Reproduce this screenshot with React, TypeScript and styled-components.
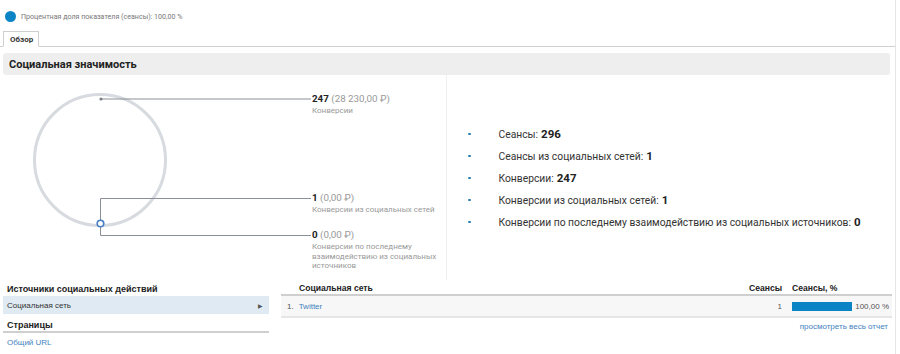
import React from "react";
import styled, { createGlobalStyle } from "styled-components";

const Global = createGlobalStyle`
  html, body { margin: 0; padding: 0; background: #fff; }
  body { font-family: Roboto, "Noto Sans", Arial, sans-serif; color: #333; }
  * { box-sizing: border-box; }
`;

const Page = styled.div`
  width: 896px;
  height: 354px;
  border-right: 1px solid #e6e6e6;
  overflow: hidden;
`;

const Legend = styled.div`
  height: 32px;
  display: flex;
  align-items: center;
  padding-left: 5px;
  gap: 5px;
  font-size: 7.1px;
  color: #777;
`;

const Dot = styled.span`
  width: 11px;
  height: 11px;
  border-radius: 50%;
  background: #0b84c6;
`;

const TabBar = styled.div`
  height: 15px;
  padding-left: 3px;
  border-bottom: 1px solid #cfcfcf;
  display: flex;
  align-items: flex-end;
`;

const Tab = styled.div`
  height: 16px;
  margin-bottom: -1px;
  padding: 0 5px 0 6px;
  border: 1px solid #cfcfcf;
  border-bottom-color: #fff;
  background: #fff;
  font-size: 8px;
  font-weight: 700;
  color: #333;
  display: flex;
  align-items: center;
`;

const SectionHeader = styled.div`
  margin: 6px 0 0 3px;
  width: 887px;
  height: 22px;
  border-radius: 3px;
  background: #eeeeee;
  display: flex;
  align-items: center;
  padding-left: 6px;
  font-size: 11px;
  font-weight: 700;
  color: #222;
`;

const Overview = styled.div`
  display: flex;
  margin-left: 3px;
  height: 205px;
`;

const ChartPanel = styled.div`
  position: relative;
  width: 444px;
  height: 205px;
  border-right: 1px solid #efefef;
`;

const ChartSvg = styled.svg`
  display: block;
`;

const Annotation = styled.div<{ $top: number }>`
  position: absolute;
  left: 309px;
  top: ${(p) => p.$top}px;
  width: 126px;
`;

const AnnValue = styled.div`
  font-size: 9.8px;
  line-height: 12px;
  color: #999;
  b { color: #222; font-weight: 700; }
`;

const AnnLabel = styled.div`
  font-size: 8px;
  line-height: 9.7px;
  color: #999;
  margin-top: 1px;
`;

const StatsPanel = styled.ul`
  list-style: none;
  margin: 0;
  padding: 48px 0 0 21px;
  display: flex;
  flex-direction: column;
`;

const StatRow = styled.li`
  height: 22px;
  display: flex;
  align-items: center;
  font-size: 10.3px;
  color: #333;
  b { font-size: 11.5px; font-weight: 700; color: #222; margin-left: 3px; }
`;

const Bullet = styled.span`
  width: 2.5px;
  height: 2.5px;
  border-radius: 50%;
  background: #2a7db5;
  margin-right: 28px;
`;

const Bottom = styled.div`
  display: flex;
  margin: 1px 0 0 3px;
  gap: 12px;
  font-family: "Liberation Sans", Arial, sans-serif;
`;

const SidePanel = styled.div`
  width: 266px;
  display: flex;
  flex-direction: column;
`;

const SideHeader = styled.div<{ $underline?: boolean }>`
  height: 15px;
  display: flex;
  align-items: center;
  padding-left: 4px;
  font-size: 9px;
  font-weight: 700;
  color: #222;
  border-bottom: ${(p) => (p.$underline ? "2px solid #cfcfcf" : "none")};
`;

const SideItem = styled.div<{ $selected?: boolean }>`
  height: 18px;
  display: flex;
  align-items: center;
  justify-content: space-between;
  padding: 0 6px 0 4px;
  font-size: 8px;
  color: ${(p) => (p.$selected ? "#333" : "#3f82bf")};
  background: ${(p) => (p.$selected ? "#dfeaf2" : "transparent")};
  margin-bottom: ${(p) => (p.$selected ? "4px" : "0")};
`;

const Arrow = styled.span`
  font-size: 6px;
  color: #555;
`;

const TablePanel = styled.div`
  flex: 1;
  margin-right: 3px;
  display: flex;
  flex-direction: column;
`;

const Grid = styled.div<{ $head?: boolean }>`
  display: grid;
  grid-template-columns: 1fr 70px 108px;
  align-items: center;
  height: ${(p) => (p.$head ? "15px" : "22px")};
  font-size: ${(p) => (p.$head ? "8.6px" : "8px")};
  font-weight: ${(p) => (p.$head ? 700 : 400)};
  color: ${(p) => (p.$head ? "#222" : "#555")};
  background: ${(p) => (p.$head ? "transparent" : "#f7f7f7")};
  border-bottom: 2px solid ${(p) => (p.$head ? "#cfcfcf" : "#e6e6e6")};
`;

const NameCell = styled.div<{ $head?: boolean }>`
  display: flex;
  padding-left: ${(p) => (p.$head ? "18px" : "6px")};
  gap: 5px;
`;

const Link = styled.a`
  color: #3f82bf;
  text-decoration: none;
`;

const NumCell = styled.div`
  text-align: right;
  padding-right: 2px;
`;

const PctCell = styled.div`
  display: flex;
  align-items: center;
  padding-left: 8px;
  padding-right: 3px;
  justify-content: space-between;
`;

const Bar = styled.span`
  width: 60px;
  height: 9px;
  background: #0b84c6;
`;

const More = styled.div`
  text-align: right;
  padding: 4px 4px 0 0;
  font-size: 8px;
`;

export default function App() {
  return (
    <Page>
      <Global />
      <Legend>
        <Dot />
        <span>Процентная доля показателя (сеансы): 100,00 %</span>
      </Legend>
      <TabBar>
        <Tab>Обзор</Tab>
      </TabBar>
      <SectionHeader>Социальная значимость</SectionHeader>
      <Overview>
        <ChartPanel>
          <ChartSvg width="444" height="205">
            <circle cx="97" cy="85" r="65.5" fill="none" stroke="#d7dbe0" strokeWidth="3" />
            <line x1="98" y1="24" x2="308" y2="24" stroke="#8a9097" strokeWidth="1" />
            <circle cx="98" cy="24" r="1.6" fill="#7a8087" />
            <polyline points="308,123.5 97.5,123.5 97.5,160.5 308,160.5" fill="none" stroke="#8a9097" strokeWidth="1" />
            <circle cx="97.5" cy="148.5" r="3.3" fill="#fff" stroke="#4a7fc8" strokeWidth="1.6" />
          </ChartSvg>
          <Annotation $top={18}>
            <AnnValue><b>247</b> (28 230,00 ₽)</AnnValue>
            <AnnLabel>Конверсии</AnnLabel>
          </Annotation>
          <Annotation $top={117}>
            <AnnValue><b>1</b> (0,00 ₽)</AnnValue>
            <AnnLabel>Конверсии из социальных сетей</AnnLabel>
          </Annotation>
          <Annotation $top={154}>
            <AnnValue><b>0</b> (0,00 ₽)</AnnValue>
            <AnnLabel>Конверсии по последнему взаимодействию из социальных источников</AnnLabel>
          </Annotation>
        </ChartPanel>
        <StatsPanel>
          <StatRow><Bullet />Сеансы:<b>296</b></StatRow>
          <StatRow><Bullet />Сеансы из социальных сетей:<b>1</b></StatRow>
          <StatRow><Bullet />Конверсии:<b>247</b></StatRow>
          <StatRow><Bullet />Конверсии из социальных сетей:<b>1</b></StatRow>
          <StatRow><Bullet />Конверсии по последнему взаимодействию из социальных источников:<b>0</b></StatRow>
        </StatsPanel>
      </Overview>
      <Bottom>
        <SidePanel>
          <SideHeader>Источники социальных действий</SideHeader>
          <SideItem $selected>
            <span>Социальная сеть</span>
            <Arrow>▶</Arrow>
          </SideItem>
          <SideHeader $underline>Страницы</SideHeader>
          <SideItem>Общий URL</SideItem>
        </SidePanel>
        <TablePanel>
          <Grid $head>
            <NameCell $head>Социальная сеть</NameCell>
            <NumCell>Сеансы</NumCell>
            <PctCell>Сеансы, %</PctCell>
          </Grid>
          <Grid>
            <NameCell><span>1.</span><Link href="#">Twitter</Link></NameCell>
            <NumCell>1</NumCell>
            <PctCell><Bar /><span>100,00 %</span></PctCell>
          </Grid>
          <More><Link href="#">просмотреть весь отчет</Link></More>
        </TablePanel>
      </Bottom>
    </Page>
  );
}
